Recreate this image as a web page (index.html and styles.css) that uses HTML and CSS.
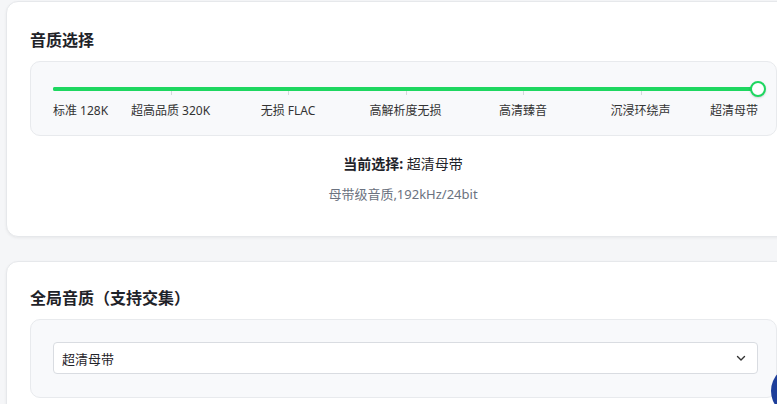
FILE: index.html
```html
<!DOCTYPE html>
<html lang="zh">
<head>
<meta charset="utf-8">
<link rel="stylesheet" href="styles.css">
</head>
<body>
<main class="page">
  <section class="card">
    <h2 class="card-title">音质选择</h2>
    <div class="panel slider-panel">
      <div class="slider">
        <div class="track">
          <div class="ticks">
            <span></span><span></span><span></span><span></span><span></span><span></span>
          </div>
          <div class="knob"></div>
        </div>
        <div class="labels">
          <span class="lbl first">标准 128K</span>
          <span class="lbl">超高品质 320K</span>
          <span class="lbl">无损 FLAC</span>
          <span class="lbl">高解析度无损</span>
          <span class="lbl">高清臻音</span>
          <span class="lbl">沉浸环绕声</span>
          <span class="lbl last">超清母带</span>
        </div>
      </div>
    </div>
    <div class="current">
      <p class="current-line"><strong>当前选择:</strong> 超清母带</p>
      <p class="current-desc">母带级音质,192kHz/24bit</p>
    </div>
  </section>

  <section class="card card2">
    <h2 class="card-title">全局音质（支持交集）</h2>
    <div class="panel select-panel">
      <div class="select">
        <span>超清母带</span>
        <svg class="chev" width="12" height="12" viewBox="0 0 12 12"><path d="M2.5 4.5 L6 8 L9.5 4.5" fill="none" stroke="#333" stroke-width="1.4" stroke-linecap="round" stroke-linejoin="round"/></svg>
      </div>
    </div>
  </section>
</main>
<div class="fab"></div>
</body>
</html>
```

FILE: styles.css
```css
* { box-sizing: border-box; }
html, body {
  margin: 0;
  padding: 0;
  background: #f5f6f8;
  overflow: hidden;
  width: 777px;
  height: 404px;
}
body {
  font-family: "Noto Sans", "Noto Sans CJK SC", sans-serif;
  color: #1f2329;
}
.page {
  padding: 1px 0 0 6px;
  width: 820px;
}
.card {
  width: 794px;
  background: #fff;
  border: 1px solid #e6e8eb;
  border-radius: 12px;
  box-shadow: 0 1px 3px rgba(0,0,0,0.06);
  padding: 25px 23px 0 23px;
  height: 236px;
}
.card2 {
  margin-top: 24px;
  height: 160px;
  padding-top: 23px;
}
.card-title {
  margin: 0 0 10px 0;
  font-size: 16px;
  line-height: 24px;
  font-weight: 700;
  color: #1f2329;
  font-family: "Noto Sans CJK SC", sans-serif;
}
.panel {
  background: #f8f9fb;
  border: 1px solid #e8eaed;
  border-radius: 10px;
  width: 747px;
}
.slider-panel {
  height: 75px;
  padding: 25px 18px 0 22px;
}
.slider { width: 705px; }
.track {
  position: relative;
  height: 4px;
  background: #1ed760;
  border-radius: 2px;
}
.ticks {
  display: grid;
  grid-template-columns: repeat(6, 1fr);
  height: 8px;
  position: absolute;
  left: 0; right: 0; top: 0;
  z-index: 0;
}
.ticks span { border-left: 1px solid #d5d8dc; }
.ticks span:first-child { border-left: none; }
.knob {
  position: absolute;
  right: -8px;
  top: -6px;
  width: 16px;
  height: 16px;
  border-radius: 50%;
  background: #fff;
  border: 2.5px solid #1ed760;
  box-shadow: 0 1px 2px rgba(0,0,0,0.15);
  z-index: 2;
}
.track::before {
  content: "";
  position: absolute;
  inset: 0;
  background: #1ed760;
  border-radius: 2px;
  z-index: 1;
}
.labels {
  display: grid;
  grid-template-columns: repeat(12, 1fr);
  margin-top: 12px;
  font-size: 12px;
  line-height: 16px;
  color: #333;
  font-family: "Noto Sans", "Noto Sans CJK SC", sans-serif;
}
.lbl {
  grid-column: span 2;
  text-align: center;
  white-space: nowrap;
  display: flex;
  justify-content: center;
}
.lbl.first { grid-column: span 1; justify-content: flex-start; }
.lbl.last { grid-column: span 1; justify-content: flex-end; }
.current {
  text-align: center;
  padding-top: 18px;
}
.current-line {
  margin: 0;
  font-size: 14px;
  line-height: 20px;
  color: #1f2329;
}
.current-line strong { font-weight: 700; }
.current-desc {
  margin: 10px 0 0 0;
  font-size: 13px;
  line-height: 20px;
  color: #6b7280;
}
.select-panel {
  height: 79px;
  padding: 22px 0 0 22px;
}
.select {
  width: 705px;
  height: 32px;
  background: #fff;
  border: 1px solid #d9dce1;
  border-radius: 4px;
  display: flex;
  align-items: center;
  justify-content: space-between;
  padding: 0 10px 0 8px;
  font-size: 13px;
  color: #1f2329;
}
.chev { display: block; }
.fab {
  position: fixed;
  left: 771px;
  top: 365px;
  width: 52px;
  height: 52px;
  border-radius: 50%;
  background: #1e3f9a;
}
```
